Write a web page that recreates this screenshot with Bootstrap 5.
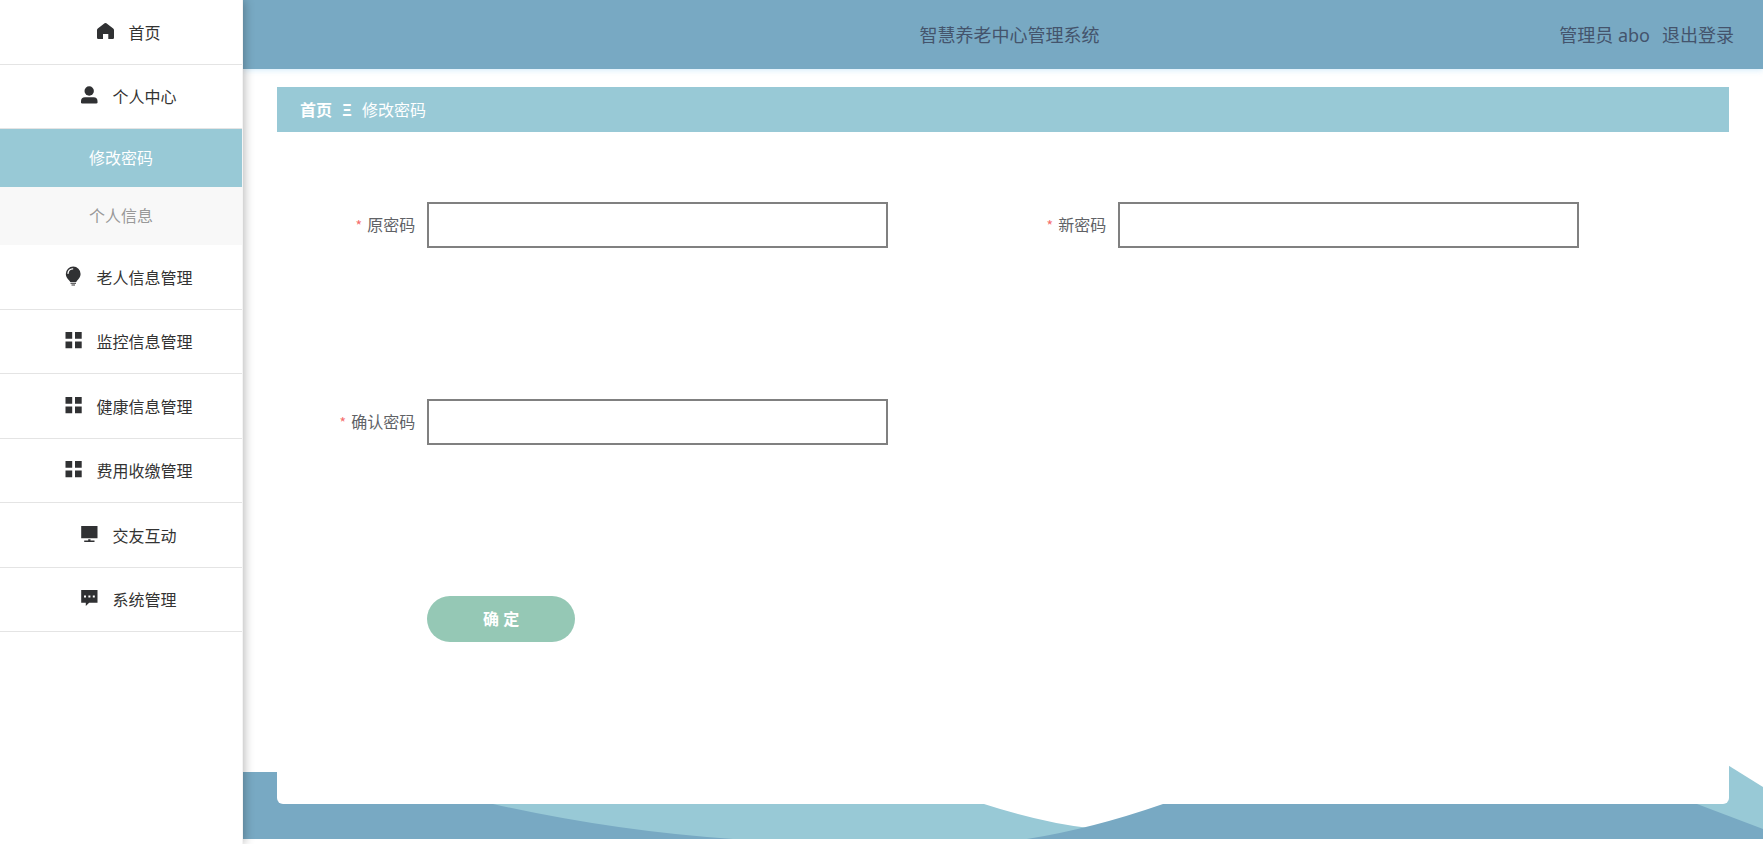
<!DOCTYPE html>
<html lang="zh-CN">
<head>
<meta charset="utf-8">
<meta name="viewport" content="width=device-width, initial-scale=1">
<title>智慧养老中心管理系统</title>
<link href="https://cdn.jsdelivr.net/npm/bootstrap@5.3.0/dist/css/bootstrap.min.css" rel="stylesheet">
<style>
  :root { --deep: #78a9c3; --soft: #98c9d6; --mint: #95c8b5; }
  body { font-family: "Noto Sans", "Noto Sans CJK SC", sans-serif; font-size: 16px; line-height: 24px; color: #333; background: #fff; }

  /* sidebar */
  .side { width: 243px; z-index: 2; border-right: 1px solid #f4f4f4; box-shadow: 1px 0 10px rgba(0, 0, 0, .3); }
  .side-link { height: 65px; gap: 14px; padding: 1px 0 0 16px; color: #333; border-bottom: 1px solid #e4e4e4; }
  .side-item:nth-child(even) > .side-link { height: 64px; }
  .side-link svg { width: 17px; height: 20px; margin-bottom: 4px; fill: #303133; }
  .sub-link { height: 58px; color: #999; background: #f8f8f8; }
  .sub-link.active { color: #fff; background: var(--soft); }

  /* header */
  .top-bar { display: grid; grid-template-columns: 1fr auto 1fr; height: 69px; padding: 0 29px 0 42px; font-size: 18px; color: #44546c; background: var(--deep); box-shadow: 0 1px 6px rgba(100, 185, 240, .3); }
  .top-bar h1 { grid-column: 2; font-size: 18px; line-height: 24px; }

  /* content */
  .panel { margin: 18px 34px 40px; border-radius: 0 0 6px 6px; z-index: 1; }
  .crumbs { --bs-breadcrumb-divider: "Ξ"; --bs-breadcrumb-divider-color: #fff; --bs-breadcrumb-item-padding-x: 10px; height: 45px; padding: 1px 23px 0; background: var(--soft); }
  .crumbs a { font-weight: 700; }
  .crumbs .breadcrumb-item + .breadcrumb-item::before { font-weight: 700; }
  .form-area { padding: 70px 35px 0; }
  .field { height: 46px; margin-bottom: 151px; }
  .field label { padding-right: 12px; color: #606266; }
  .field .star { margin-right: 5px; font-family: "Noto Sans CJK SC", sans-serif; font-size: 14px; color: #f56c6c; }
  .field input { height: 46px; border: 2px solid #808080; border-radius: 0; }
  .btn-save { width: 148px; height: 46px; font-weight: 700; color: #fff; background: var(--mint); }
  .btn-save:hover { color: #fff; background: #84baa6; }
  .waves { bottom: 5px; height: 80px; }
</style>
</head>
<body>
<div class="d-flex min-vh-100">

  <nav class="side flex-shrink-0 bg-white position-relative" aria-label="主菜单">
    <ul class="list-unstyled mb-0">
      <li class="side-item"><a href="#" class="side-link d-flex align-items-center justify-content-center text-decoration-none">
        <svg viewBox="0 0 17 20"><path d="M8.500 2 Q9 2 9.400 2.300 L16.200 7.600 Q17 8.200 17 9 V16.800 Q17 18 15.800 18 H11.300 V13 H6 V18 H1.200 Q0 18 0 16.800 V9 Q0 8.200.8 7.600 L7.600 2.300 Q8 2 8.500 2Z"/></svg>首页</a></li>
      <li class="side-item"><a href="#" class="side-link d-flex align-items-center justify-content-center text-decoration-none">
        <svg viewBox="0 0 17 20"><circle cx="8.200" cy="6" r="4.700"/><path d="M4 12.200H12.500Q16.500 12.200 16.500 16V17.200Q16.500 18.500 15.200 18.500H1.300Q0 18.500 0 17.200V16Q0 12.200 4 12.200Z"/></svg>个人中心</a>
        <ul class="list-unstyled mb-0">
          <li><a href="#" class="sub-link active d-flex align-items-center justify-content-center text-decoration-none" aria-current="page">修改密码</a></li>
          <li><a href="#" class="sub-link d-flex align-items-center justify-content-center text-decoration-none">个人信息</a></li>
        </ul></li>
      <li class="side-item"><a href="#" class="side-link d-flex align-items-center justify-content-center text-decoration-none">
        <svg viewBox="0 0 17 20"><path d="M8.200.5A7.400 7.400 0 0 1 15.600 7.900C15.600 11 13.700 12.500 12.200 14.500L11.200 16H5.300L4.200 14.500C2.700 12.500.8 11 .8 7.900A7.400 7.400 0 0 1 8.200.5Z"/><path d="M3 7.400A5 5 0 0 1 7.700 2.900" fill="none" stroke="#fff" stroke-width="1.300" stroke-linecap="round"/><path d="M5.500 16.700H11V17.800H5.500ZM6.500 18.400H10V19.500H6.500Z"/></svg>老人信息管理</a></li>
      <li class="side-item"><a href="#" class="side-link d-flex align-items-center justify-content-center text-decoration-none">
        <svg viewBox="0 0 17 20"><path d="M.5 2H7.200V8.700H.5ZM10 2H16.700V8.700H10ZM.5 11.500H7.200V18.200H.5ZM10 11.500H16.700V18.200H10Z"/></svg>监控信息管理</a></li>
      <li class="side-item"><a href="#" class="side-link d-flex align-items-center justify-content-center text-decoration-none">
        <svg viewBox="0 0 17 20"><path d="M.5 2H7.200V8.700H.5ZM10 2H16.700V8.700H10ZM.5 11.500H7.200V18.200H.5ZM10 11.500H16.700V18.200H10Z"/></svg>健康信息管理</a></li>
      <li class="side-item"><a href="#" class="side-link d-flex align-items-center justify-content-center text-decoration-none">
        <svg viewBox="0 0 17 20"><path d="M.5 2H7.200V8.700H.5ZM10 2H16.700V8.700H10ZM.5 11.500H7.200V18.200H.5ZM10 11.500H16.700V18.200H10Z"/></svg>费用收缴管理</a></li>
      <li class="side-item"><a href="#" class="side-link d-flex align-items-center justify-content-center text-decoration-none">
        <svg viewBox="0 0 17 20"><path d="M.2 2H16.500V14.300H.2ZM7.200 15.300H9.500V16.600H13.500V17.900H3.200V16.600H7.200Z"/></svg>交友互动</a></li>
      <li class="side-item"><a href="#" class="side-link d-flex align-items-center justify-content-center text-decoration-none">
        <svg viewBox="0 0 17 20"><path d="M.2 2H16.500V14.800H8.200L4.800 18V14.800H.2Z"/><path d="M3 7.500H5V9.500H3ZM7.400 7.500H9.400V9.500H7.400ZM11.800 7.500H13.800V9.500H11.800Z" fill="#fff"/></svg>系统管理</a></li>
    </ul>
  </nav>

  <div class="flex-grow-1 d-flex flex-column position-relative">
    <header class="top-bar align-items-center">
      <h1 class="mb-0 fw-normal">智慧养老中心管理系统</h1>
      <div class="d-flex justify-content-end">
        <span class="me-2 pe-1">管理员 abo</span>
        <a href="#" class="text-reset text-decoration-none">退出登录</a>
      </div>
    </header>

    <svg class="waves position-absolute start-0 w-100" viewBox="0 0 1520 80" preserveAspectRatio="none" aria-hidden="true">
      <path fill="#98c9d6" d="M150 35 H720 L741 45 Q800 64 846 69 L900 80 H150Z"/>
      <path fill="#98c9d6" d="M1440 0 H1475 L1520 28 V80 H1400Z"/>
      <path fill="#78a9c3" d="M0 13 H34 Q150 20 250 45 Q370 72 490 80 H0Z"/>
      <path fill="#78a9c3" d="M784 80 Q848 70 920 45 L945 34 H1420 L1454 45 L1520 70 V80Z"/>
    </svg>

    <main class="panel bg-white position-relative flex-grow-1">
      <nav aria-label="面包屑">
        <ol class="crumbs breadcrumb align-items-center mb-0 text-white">
          <li class="breadcrumb-item"><a href="#" class="text-white text-decoration-none">首页</a></li>
          <li class="breadcrumb-item text-white" aria-current="page">修改密码</li>
        </ol>
      </nav>
      <form class="form-area">
        <div class="row g-0">
          <div class="col-6">
            <div class="field row g-0 align-items-center">
              <label for="old" class="col-2 text-end text-nowrap"><span class="star">*</span>原密码</label>
              <div class="col-8"><input id="old" type="password" class="form-control"></div>
            </div>
          </div>
          <div class="col-6">
            <div class="field row g-0 align-items-center">
              <label for="new" class="col-2 text-end text-nowrap"><span class="star">*</span>新密码</label>
              <div class="col-8"><input id="new" type="password" class="form-control"></div>
            </div>
          </div>
          <div class="col-6">
            <div class="field row g-0 align-items-center">
              <label for="again" class="col-2 text-end text-nowrap"><span class="star">*</span>确认密码</label>
              <div class="col-8"><input id="again" type="password" class="form-control"></div>
            </div>
          </div>
        </div>
        <div class="row g-0">
          <div class="col-6"><div class="row g-0"><div class="col-8 offset-2">
            <button type="button" class="btn btn-save rounded-pill border-0 p-0">确 定</button>
          </div></div></div>
        </div>
      </form>
    </main>
  </div>
</div>
<script src="https://cdn.jsdelivr.net/npm/bootstrap@5.3.0/dist/js/bootstrap.bundle.min.js"></script>
</body>
</html>
